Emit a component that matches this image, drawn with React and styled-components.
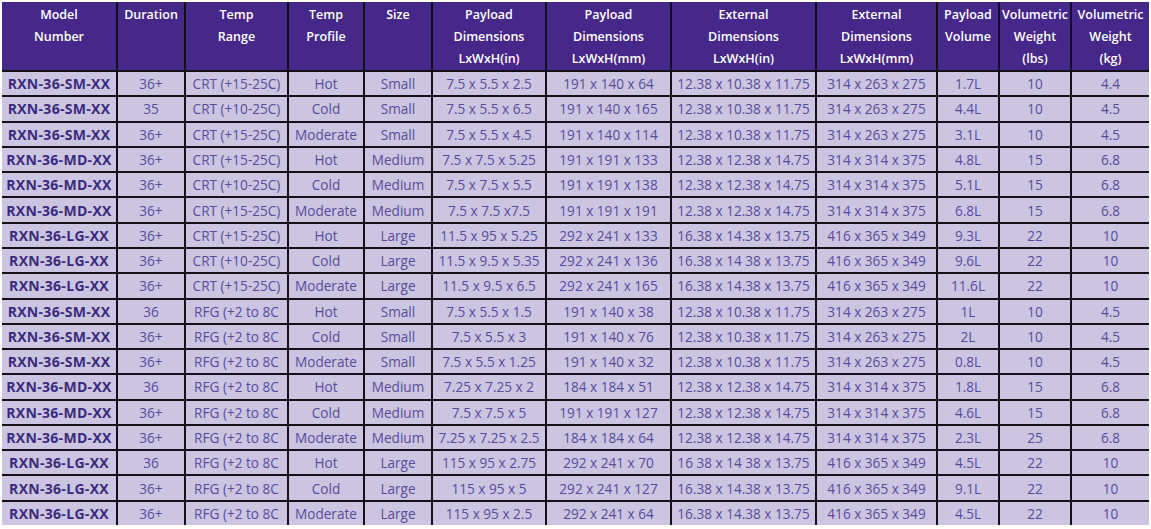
import React from "react";
import styled, { createGlobalStyle } from "styled-components";

const GlobalStyle = createGlobalStyle`
  html, body {
    margin: 0;
    padding: 0;
    background: #ffffff;
  }
  body {
    font-family: "Open Sans", "Liberation Sans", sans-serif;
  }
`;

const Page = styled.div`
  padding: 2px;
  width: 1147px;
`;

const Grid = styled.div`
  display: grid;
  grid-template-columns: 114px 66px 101px 74px 66px 112px 123px 143px 119px 60px 70px 77px;
  grid-template-rows: 68px repeat(18, 1fr);
  gap: 2px;
  height: 523px;
  background: #141018;
`;

const HeadCell = styled.div`
  background: #45288a;
  color: #ffffff;
  font-size: 12.5px;
  font-weight: 600;
  line-height: 22px;
  text-align: center;
  padding-top: 2px;
  white-space: nowrap;
`;

const Cell = styled.div`
  background: #cbc5e2;
  color: ${({ $bold }) => ($bold ? "#3b2a7c" : "#5a4b9a")};
  font-size: ${({ $bold }) => ($bold ? "14px" : "13.6px")};
  font-weight: ${({ $bold }) => ($bold ? 700 : 400)};
  letter-spacing: ${({ $bold }) => ($bold ? "0.3px" : "0")};
  display: flex;
  align-items: center;
  justify-content: center;
  white-space: nowrap;
`;

const headers = [
  ["Model", "Number"],
  ["Duration"],
  ["Temp", "Range"],
  ["Temp", "Profile"],
  ["Size"],
  ["Payload", "Dimensions", "LxWxH(in)"],
  ["Payload", "Dimensions", "LxWxH(mm)"],
  ["External", "Dimensions", "LxWxH(in)"],
  ["External", "Dimensions", "LxWxH(mm)"],
  ["Payload", "Volume"],
  ["Volumetric", "Weight", "(lbs)"],
  ["Volumetric", "Weight", "(kg)"],
];

const rows = [
  ["RXN-36-SM-XX", "36+", "CRT (+15-25C)", "Hot", "Small", "7.5 x 5.5 x 2.5", "191 x 140 x 64", "12.38 x 10.38 x 11.75", "314 x 263 x 275", "1.7L", "10", "4.4"],
  ["RXN-36-SM-XX", "35", "CRT (+10-25C)", "Cold", "Small", "7.5 x 5.5 x 6.5", "191 x 140 x 165", "12.38 x 10.38 x 11.75", "314 x 263 x 275", "4.4L", "10", "4.5"],
  ["RXN-36-SM-XX", "36+", "CRT (+15-25C)", "Moderate", "Small", "7.5 x 5.5 x 4.5", "191 x 140 x 114", "12.38 x 10.38 x 11.75", "314 x 263 x 275", "3.1L", "10", "4.5"],
  ["RXN-36-MD-XX", "36+", "CRT (+15-25C)", "Hot", "Medium", "7.5 x 7.5 x 5.25", "191 x 191 x 133", "12.38 x 12.38 x 14.75", "314 x 314 x 375", "4.8L", "15", "6.8"],
  ["RXN-36-MD-XX", "36+", "CRT (+10-25C)", "Cold", "Medium", "7.5 x 7.5 x 5.5", "191 x 191 x 138", "12.38 x 12.38 x 14.75", "314 x 314 x 375", "5.1L", "15", "6.8"],
  ["RXN-36-MD-XX", "36+", "CRT (+15-25C)", "Moderate", "Medium", "7.5 x 7.5 x7.5", "191 x 191 x 191", "12.38 x 12.38 x 14.75", "314 x 314 x 375", "6.8L", "15", "6.8"],
  ["RXN-36-LG-XX", "36+", "CRT (+15-25C)", "Hot", "Large", "11.5 x 95 x 5.25", "292 x 241 x 133", "16.38 x 14.38 x 13.75", "416 x 365 x 349", "9.3L", "22", "10"],
  ["RXN-36-LG-XX", "36+", "CRT (+10-25C)", "Cold", "Large", "11.5 x 9.5 x 5.35", "292 x 241 x 136", "16.38 x 14 38 x 13.75", "416 x 365 x 349", "9.6L", "22", "10"],
  ["RXN-36-LG-XX", "36+", "CRT (+15-25C)", "Moderate", "Large", "11.5 x 9.5 x 6.5", "292 x 241 x 165", "16.38 x 14.38 x 13.75", "416 x 365 x 349", "11.6L", "22", "10"],
  ["RXN-36-SM-XX", "36", "RFG (+2 to 8C", "Hot", "Small", "7.5 x 5.5 x 1.5", "191 x 140 x 38", "12.38 x 10.38 x 11.75", "314 x 263 x 275", "1L", "10", "4.5"],
  ["RXN-36-SM-XX", "36+", "RFG (+2 to 8C", "Cold", "Small", "7.5 x 5.5 x 3", "191 x 140 x 76", "12.38 x 10.38 x 11.75", "314 x 263 x 275", "2L", "10", "4.5"],
  ["RXN-36-SM-XX", "36+", "RFG (+2 to 8C", "Moderate", "Small", "7.5 x 5.5 x 1.25", "191 x 140 x 32", "12.38 x 10.38 x 11.75", "314 x 263 x 275", "0.8L", "10", "4.5"],
  ["RXN-36-MD-XX", "36", "RFG (+2 to 8C", "Hot", "Medium", "7.25 x 7.25 x 2", "184 x 184 x 51", "12.38 x 12.38 x 14.75", "314 x 314 x 375", "1.8L", "15", "6.8"],
  ["RXN-36-MD-XX", "36+", "RFG (+2 to 8C", "Cold", "Medium", "7.5 x 7.5 x 5", "191 x 191 x 127", "12.38 x 12.38 x 14.75", "314 x 314 x 375", "4.6L", "15", "6.8"],
  ["RXN-36-MD-XX", "36+", "RFG (+2 to 8C", "Moderate", "Medium", "7.25 x 7.25 x 2.5", "184 x 184 x 64", "12.38 x 12.38 x 14.75", "314 x 314 x 375", "2.3L", "25", "6.8"],
  ["RXN-36-LG-XX", "36", "RFG (+2 to 8C", "Hot", "Large", "115 x 95 x 2.75", "292 x 241 x 70", "16 38 x 14 38 x 13.75", "416 x 365 x 349", "4.5L", "22", "10"],
  ["RXN-36-LG-XX", "36+", "RFG (+2 to 8C", "Cold", "Large", "115 x 95 x 5", "292 x 241 x 127", "16.38 x 14.38 x 13.75", "416 x 365 x 349", "9.1L", "22", "10"],
  ["RXN-36-LG-XX", "36+", "RFG (+2 to 8C", "Moderate", "Large", "115 x 95 x 2.5", "292 x 241 x 64", "16.38 x 14.38 x 13.75", "416 x 365 x 349", "4.5L", "22", "10"],
];

export default function App() {
  return (
    <Page>
      <GlobalStyle />
      <Grid>
        {headers.map((lines, i) => (
          <HeadCell key={"h" + i}>
            {lines.map((l, j) => (
              <div key={j}>{l}</div>
            ))}
          </HeadCell>
        ))}
        {rows.map((row, r) =>
          row.map((v, c) => (
            <Cell key={r + "-" + c} $bold={c === 0}>
              {v}
            </Cell>
          ))
        )}
      </Grid>
    </Page>
  );
}
